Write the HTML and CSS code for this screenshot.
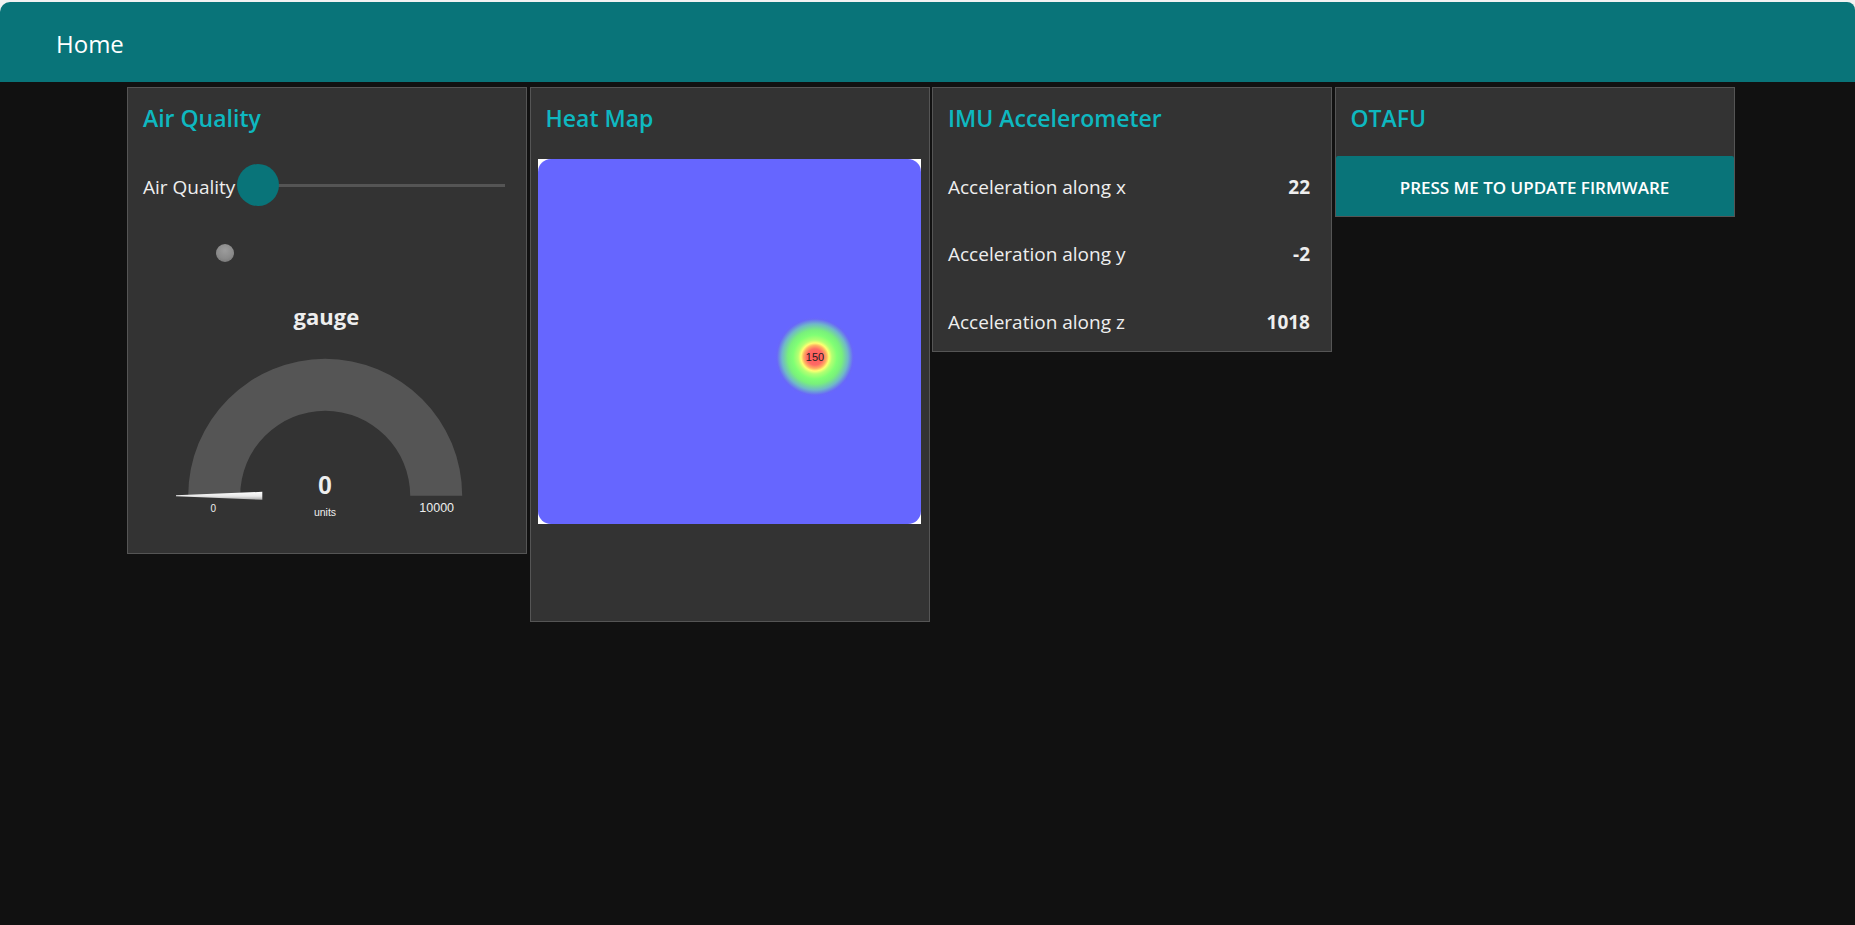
FILE: index.html
```html
<!DOCTYPE html>
<html lang="en">
<head>
<meta charset="utf-8">
<title>Home</title>
<link rel="stylesheet" href="styles.css">
</head>
<body>
<div class="top">
  <header class="toolbar"><span class="toolbar-title">Home</span></header>
</div>
<main class="board">
  <section class="card">
    <h2 class="card-title">Air Quality</h2>
    <div class="card-body">
      <div class="row slider-row">
        <span class="slider-label">Air Quality</span>
        <div class="slider"><div class="slider-track"></div><div class="slider-thumb"></div></div>
      </div>
      <div class="row dot-row"><span class="dot"></span></div>
      <div class="gauge-widget">
        <svg class="gauge" width="398" height="262.5" viewBox="0 0 398 262.5">
          <defs>
            <linearGradient id="needle" x1="0" y1="0" x2="0" y2="1">
              <stop offset="0" stop-color="#ffffff"/>
              <stop offset="0.55" stop-color="#e8e8e8"/>
              <stop offset="1" stop-color="#a8a8a8"/>
            </linearGradient>
          </defs>
          <text class="g-title" x="198.4" y="33.5">gauge</text>
          <path d="M 60.2 204.8 A 137 137 0 0 1 334.2 204.8 L 282.2 204.8 A 85 85 0 0 0 112.2 204.8 Z" fill="#555555"/>
          <polygon points="48,204.2 134.3,200.8 134.3,208.8 48,205.2" fill="url(#needle)"/>
          <text class="g-value" x="197" y="202.8">0</text>
          <text class="g-units" x="197" y="225.3">units</text>
          <text class="g-min" x="85.3" y="221.3">0</text>
          <text class="g-max" x="308.7" y="220.8">10000</text>
        </svg>
      </div>
    </div>
  </section>

  <section class="card">
    <h2 class="card-title">Heat Map</h2>
    <div class="card-body">
      <div class="heat-widget">
        <div class="heat-canvas">
          <div class="heat-field"><span class="heat-label">150</span></div>
        </div>
      </div>
    </div>
  </section>

  <section class="card">
    <h2 class="card-title">IMU Accelerometer</h2>
    <div class="card-body">
      <div class="row text-row"><span>Acceleration along x</span><b>22</b></div>
      <div class="row text-row"><span>Acceleration along y</span><b>-2</b></div>
      <div class="row text-row"><span>Acceleration along z</span><b>1018</b></div>
    </div>
  </section>

  <section class="card">
    <h2 class="card-title">OTAFU</h2>
    <div class="card-body">
      <button class="btn" type="button">Press me to update firmware</button>
    </div>
  </section>
</main>
</body>
</html>
```

FILE: styles.css
```css
* { box-sizing: border-box; }

html, body {
  margin: 0;
  padding: 0;
  background: #111111;
  height: 100%;
}

body {
  font-family: "Open Sans", "Noto Sans", sans-serif;
  color: #eeeeee;
}

.top {
  background: #f2f2f2;
  padding-top: 2px;
}

.toolbar {
  height: 80px;
  background: #097479;
  border-radius: 10px 8px 0 0;
  padding: 4px 0 0 56px;
  line-height: 76px;
}

.toolbar-title {
  font-size: 24px;
  color: #ffffff;
}

.board {
  display: flex;
  align-items: flex-start;
  gap: 2.5px;
  padding: 5px 0 0 127px;
}

.card {
  width: 400px;
  flex: 0 0 400px;
  background: #333333;
  border: 1px solid #555555;
}

.card-title {
  margin: 0;
  height: 60px;
  line-height: 60px;
  padding: 0 15px;
  font-size: 23px;
  font-weight: 600;
  color: #0eb8c0;
}

.card-body {
  display: flex;
  flex-direction: column;
  gap: 7.5px;
  padding-top: 7.5px;
}

.row {
  height: 60px;
  display: flex;
  align-items: center;
  padding: 0 21px 0 15px;
  font-size: 19px;
}

.slider-label {
  line-height: 57px;
  padding-top: 3px;
}

.slider {
  position: relative;
  flex: 1;
  height: 42px;
  margin-left: 2px;
  align-self: flex-start;
  margin-top: 8.5px;
}

.slider-track {
  margin: 19.5px 0 0 21px;
  height: 3px;
  background: #555555;
}

.slider-thumb {
  position: absolute;
  left: 0;
  top: 0;
  width: 42px;
  height: 42px;
  border-radius: 50%;
  background: #097479;
}

.dot {
  width: 18px;
  height: 18px;
  border-radius: 50%;
  margin-left: 73px;
  background: radial-gradient(circle at 50% 35%, #9c9c9c 0, #8a8a8a 55%, #6e6e6e 100%);
}

.gauge-widget {
  height: 262.5px;
}

.gauge {
  display: block;
}

.gauge text {
  fill: #eeeeee;
  text-anchor: middle;
  font-family: "Liberation Sans", Arial, sans-serif;
}

.gauge .g-title {
  font-family: "Open Sans", "Noto Sans", sans-serif;
  font-weight: 700;
  font-size: 22px;
}

.gauge .g-value {
  font-weight: 700;
  font-size: 25px;
}

.gauge .g-units {
  font-size: 10.5px;
}

.gauge .g-min {
  font-size: 10px;
}

.gauge .g-max {
  font-size: 12.5px;
}

.heat-widget {
  height: 465px;
  padding: 3.5px 7.5px 0;
}

.heat-canvas {
  height: 365px;
  background: #ffffff;
}

.heat-field {
  position: relative;
  height: 100%;
  border-radius: 13px;
  background:
    radial-gradient(circle at 277px 198px,
      #ff5a5a 0px, #ff6a66 8px, #ffb062 11.5px, #ffff72 14px,
      #b4ff72 17px, #80ff74 22px, #78f07c 27px, #70b8c8 33px,
      #6868f8 38px, #6666ff 40px),
    #6666ff;
}

.heat-label {
  position: absolute;
  left: 277px;
  top: 198px;
  transform: translate(-50%, -50%);
  font-family: "Liberation Sans", Arial, sans-serif;
  font-size: 11px;
  color: #222222;
}

.text-row {
  justify-content: space-between;
  line-height: 57px;
  padding-top: 3px;
}

.text-row b {
  font-weight: 700;
}

.btn {
  display: block;
  width: 100%;
  height: 60px;
  border: none;
  border-radius: 2px 2px 0 0;
  background: #097479;
  color: #ffffff;
  font-family: "Open Sans", "Noto Sans", sans-serif;
  font-size: 17px;
  font-weight: 600;
  text-transform: uppercase;
  padding: 3px 0 0;
  margin: 0;
}
```
